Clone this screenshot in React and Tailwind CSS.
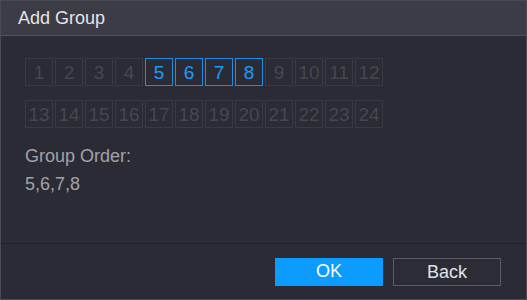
import { useState } from "react";

const CHANNELS = Array.from({ length: 24 }, (_, i) => i + 1);

function ChannelBox({ n, active, onClick }) {
  return (
    <button
      onClick={onClick}
      className={
        active
          ? "w-[28px] h-[28px] flex items-center justify-center border border-[#1c8ee6] text-[#1a9bff] text-[19px] leading-none"
          : "w-[28px] h-[28px] flex items-center justify-center border border-[#383943] text-[#464750] text-[19px] leading-none"
      }
    >
      {n}
    </button>
  );
}

export default function App() {
  const [selected, setSelected] = useState([5, 6, 7, 8]);

  function toggle(n) {
    setSelected((s) => (s.includes(n) ? s.filter((x) => x !== n) : [...s, n]));
  }

  const rows = [CHANNELS.slice(0, 12), CHANNELS.slice(12)];

  return (
    <div
      className="w-[527px] h-[300px] flex flex-col bg-[#2a2b35] border border-[#464b54]"
      style={{ fontFamily: '"Liberation Sans", Arial, sans-serif' }}
    >
      <div className="h-[35px] shrink-0 flex items-center px-[17px] bg-[#3b3c46] border-b border-[#50515a] text-[18px] text-[#e4e4e6]">
        Add Group
      </div>

      <div className="flex-1 pt-[22px] pl-[24px]">
        <div className="flex flex-col gap-[14px]">
          {rows.map((row, i) => (
            <div key={i} className="flex gap-[2px]">
              {row.map((n) => (
                <ChannelBox
                  key={n}
                  n={n}
                  active={selected.includes(n)}
                  onClick={() => toggle(n)}
                />
              ))}
            </div>
          ))}
        </div>
        <div className="mt-[14px] text-[18px] leading-[28px] text-[#a2a2a8]">
          <div>Group Order:</div>
          <div>{selected.join(",")}</div>
        </div>
      </div>

      <div className="h-[56px] shrink-0 flex items-center justify-end gap-[10px] pr-[25px] border-t border-[#1f2028]">
        <button className="w-[108px] h-[28px] bg-[#0c9bff] text-white text-[18px]">
          OK
        </button>
        <button className="w-[108px] h-[28px] border border-[#5b5c65] bg-[#2b2c36] text-[#e2e2e4] text-[18px]">
          Back
        </button>
      </div>
    </div>
  );
}
